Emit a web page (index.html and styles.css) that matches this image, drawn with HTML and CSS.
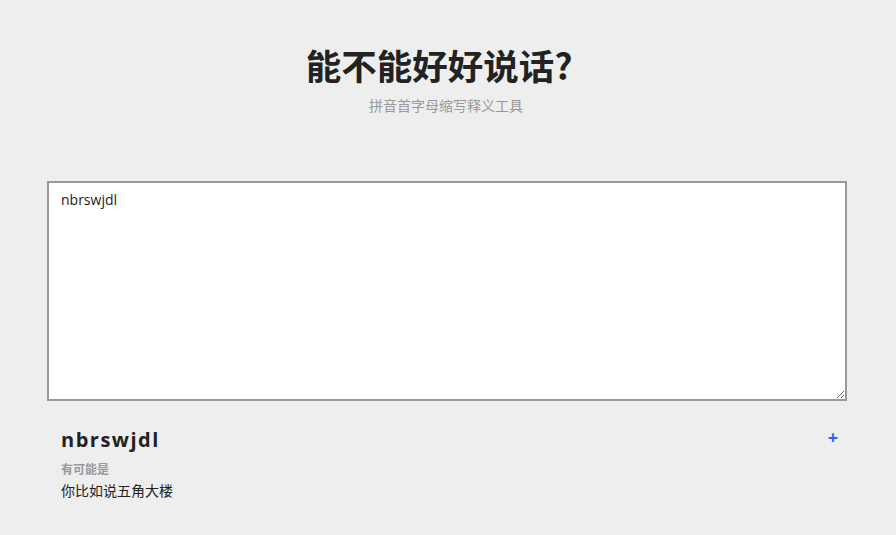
FILE: index.html
```html
<!DOCTYPE html>
<html lang="zh-CN">
<head>
  <meta charset="UTF-8">
  <meta name="viewport" content="width=device-width, initial-scale=1">
  <title>能不能好好说话?</title>
  <link rel="stylesheet" href="styles.css">
</head>
<body>
  <div class="container">
    <div class="header">
      <h1 class="title">能不能好好说话?</h1>
      <div class="subtitle">拼音首字母缩写释义工具</div>
    </div>
    <textarea class="input" spellcheck="true">nbrswjdl</textarea>
    <div class="result">
      <div class="result-head">
        <span class="word">nbrswjdl</span>
        <span class="add">+</span>
      </div>
      <div class="label">有可能是</div>
      <div class="answer">你比如说五角大楼</div>
    </div>
  </div>
</body>
</html>
```

FILE: styles.css
```css
html, body {
  margin: 0;
  padding: 0;
  background: #eee;
  font-family: "Open Sans", "Noto Sans CJK SC", sans-serif;
  color: #222;
}

.container {
  width: 800px;
  margin: 0 auto;
  padding-top: 41px;
}

.header {
  text-align: center;
  margin-bottom: 66px;
}

.title {
  margin: 0;
  padding-right: 18px;
  font-family: "Noto Sans CJK SC", sans-serif;
  font-size: 35.5px;
  font-weight: 700;
  line-height: 48px;
  color: #222;
}

.subtitle {
  margin-top: 6px;
  padding-right: 4px;
  font-family: "Noto Sans CJK SC", sans-serif;
  font-size: 14px;
  line-height: 20px;
  color: #999;
}

.input {
  display: block;
  box-sizing: border-box;
  width: 800px;
  height: 220px;
  margin: 0 0 0 -1px;
  padding: 7px 12px;
  border: 2px solid #999;
  background: #fff;
  font-family: "Open Sans", "Noto Sans CJK SC", sans-serif;
  font-size: 14px;
  line-height: 20px;
  color: #222;
  resize: vertical;
  outline: none;
}

.result {
  padding: 25px 10px 0 13px;
}

.result-head {
  display: flex;
  justify-content: space-between;
  align-items: center;
}

.word {
  font-size: 20px;
  font-weight: 700;
  letter-spacing: 1.5px;
  line-height: 28px;
  color: #222;
}

.add {
  margin-top: -6px;
  font-size: 18px;
  font-weight: 700;
  color: #1a6cf0;
  line-height: 20px;
}

.label {
  margin-top: 6px;
  font-family: "Noto Sans CJK SC", sans-serif;
  font-size: 12px;
  font-weight: 700;
  color: #999;
  line-height: 18px;
}

.answer {
  margin-top: 2px;
  font-family: "Noto Sans CJK SC", sans-serif;
  font-size: 14px;
  line-height: 20px;
  color: #222;
}
```
